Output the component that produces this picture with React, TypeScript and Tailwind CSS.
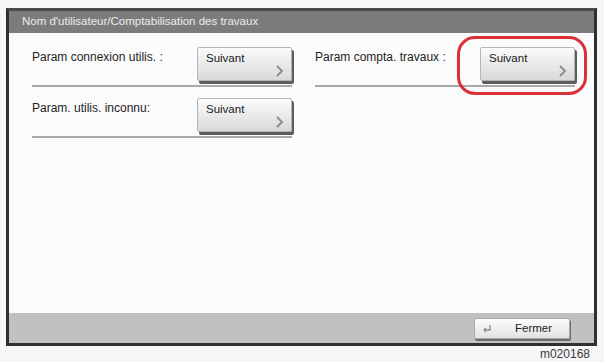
const FONT = "font-['Liberation_Sans',Arial,sans-serif]";

type Row = { label: string };

const LEFT: Row[] = [
  { label: 'Param connexion utilis. :' },
  { label: 'Param. utilis. inconnu:' },
];
const RIGHT: Row[] = [{ label: 'Param compta. travaux :' }];

function NextButton() {
  return (
    <button
      type="button"
      className="relative h-[34px] w-[95px] shrink-0 rounded-[2px] border border-[#b5b5b5] bg-gradient-to-b from-[#fbfbfb] to-[#d9d9d9] shadow-[2px_3px_0_#5d5d5d] text-left"
    >
      <span className="absolute left-[8px] top-[3px] text-[11.5px] leading-[14px] text-[#1a1a1a]">
        Suivant
      </span>
      <svg
        className="absolute right-[7px] bottom-[3px]"
        width="8"
        height="12"
        viewBox="0 0 8 12"
      >
        <polyline
          points="1,1 6,6 1,11"
          fill="none"
          stroke="#8a8a8a"
          strokeWidth="1.8"
        />
      </svg>
    </button>
  );
}

function SettingRow({ label }: Row) {
  return (
    <div className="flex flex-col">
      <div className="flex items-start justify-between">
        <span className="pt-[3px] text-[12px] leading-[14px] text-[#1e1e1e]">
          {label}
        </span>
        <NextButton />
      </div>
      <div className="mt-[4px] h-[2px] bg-[#a9a9a9]" />
    </div>
  );
}

export default function App() {
  return (
    <div className={`relative h-[362px] w-[604px] overflow-hidden bg-[#f5f6f8] ${FONT}`}>
      <div className="ml-[6px] mt-[8px] flex h-[338px] w-[591px] flex-col border-[3px] border-[#2f2f2f] border-t-[#4a4a4a]">
        <div className="flex h-[22px] items-center bg-[#7c7c7c] pl-[13px] text-[11.5px] text-[#ececec]">
          Nom d'utilisateur/Comptabilisation des travaux
        </div>

        <div className="grid h-[280px] grid-cols-[260px_260px] gap-x-[23px] bg-[#fbfbfb] pl-[23px] pt-[14px] content-start">
          <div className="flex flex-col gap-[11px]">
            {LEFT.map((r) => (
              <SettingRow key={r.label} label={r.label} />
            ))}
          </div>
          <div className="flex flex-col gap-[11px]">
            {RIGHT.map((r) => (
              <SettingRow key={r.label} label={r.label} />
            ))}
          </div>
        </div>

        <div className="flex flex-1 items-start justify-end bg-[#c1c1c1] pr-[24px] pt-[5px]">
          <button
            type="button"
            className="flex h-[21px] w-[96px] items-center rounded-[2px] border border-[#a8a8a8] bg-gradient-to-b from-[#fcfcfc] to-[#e2e2e2] shadow-[1px_2px_0_#6a6a6a] pl-[7px]"
          >
            <svg width="10" height="10" viewBox="0 0 10 10">
              <polyline
                points="8,1 8,6 2,6"
                fill="none"
                stroke="#8a8a8a"
                strokeWidth="1.3"
              />
              <polyline
                points="4,4 2,6 4,8"
                fill="none"
                stroke="#8a8a8a"
                strokeWidth="1.3"
              />
            </svg>
            <span className="ml-[23px] text-[11.5px] text-[#1e1e1e]">Fermer</span>
          </button>
        </div>
      </div>

      <div className="pr-[14px] pt-[1px] text-right text-[12px] leading-[14px] text-[#3a3a3a]">
        m020168
      </div>

      {/* highlight ring around the compta button */}
      <div className="absolute left-[457px] top-[36px] h-[59px] w-[130px] rounded-[18px] border-[3px] border-[#d9303a]" />
    </div>
  );
}
